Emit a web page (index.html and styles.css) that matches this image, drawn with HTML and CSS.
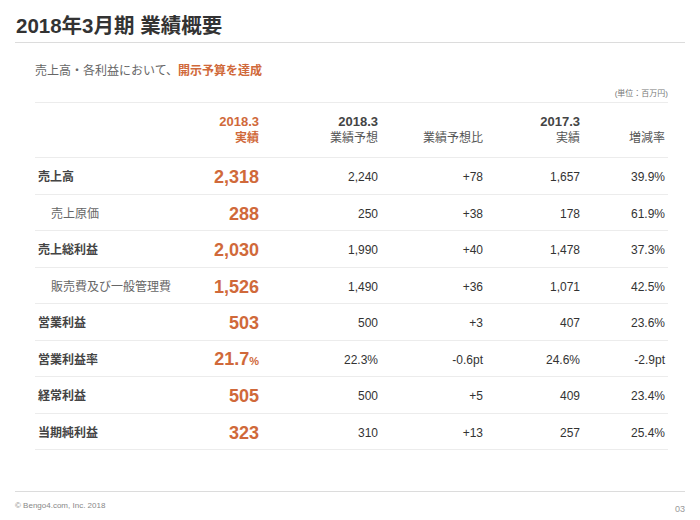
FILE: index.html
```html
<!DOCTYPE html>
<html lang="ja">
<head>
<meta charset="utf-8">
<title>2018年3月期 業績概要</title>
<link rel="stylesheet" href="styles.css">
</head>
<body>
<div class="slide">
  <header class="head">
    <h1 class="title">2018年3月期 業績概要</h1>
  </header>
  <main class="content">
    <p class="lead">売上高・各利益において、<strong class="accent">開示予算を達成</strong></p>
    <div class="unit">(単位：百万円)</div>
    <div class="table">
      <div class="row hdr">
        <div class="c lbl"></div>
        <div class="c num accent-h"><b>2018.3</b><span>実績</span></div>
        <div class="c num"><b>2018.3</b><span>業績予想</span></div>
        <div class="c num"><span>業績予想比</span></div>
        <div class="c num"><b>2017.3</b><span>実績</span></div>
        <div class="c num"><span>増減率</span></div>
      </div>
      <div class="row">
        <div class="c lbl strong">売上高</div>
        <div class="c num big">2,318</div>
        <div class="c num">2,240</div>
        <div class="c num">+78</div>
        <div class="c num">1,657</div>
        <div class="c num">39.9%</div>
      </div>
      <div class="row">
        <div class="c lbl sub">売上原価</div>
        <div class="c num big">288</div>
        <div class="c num">250</div>
        <div class="c num">+38</div>
        <div class="c num">178</div>
        <div class="c num">61.9%</div>
      </div>
      <div class="row">
        <div class="c lbl strong">売上総利益</div>
        <div class="c num big">2,030</div>
        <div class="c num">1,990</div>
        <div class="c num">+40</div>
        <div class="c num">1,478</div>
        <div class="c num">37.3%</div>
      </div>
      <div class="row">
        <div class="c lbl sub">販売費及び一般管理費</div>
        <div class="c num big">1,526</div>
        <div class="c num">1,490</div>
        <div class="c num">+36</div>
        <div class="c num">1,071</div>
        <div class="c num">42.5%</div>
      </div>
      <div class="row">
        <div class="c lbl strong">営業利益</div>
        <div class="c num big">503</div>
        <div class="c num">500</div>
        <div class="c num">+3</div>
        <div class="c num">407</div>
        <div class="c num">23.6%</div>
      </div>
      <div class="row">
        <div class="c lbl strong">営業利益率</div>
        <div class="c num big">21.7<small class="pct">%</small></div>
        <div class="c num">22.3%</div>
        <div class="c num">-0.6pt</div>
        <div class="c num">24.6%</div>
        <div class="c num">-2.9pt</div>
      </div>
      <div class="row">
        <div class="c lbl strong">経常利益</div>
        <div class="c num big">505</div>
        <div class="c num">500</div>
        <div class="c num">+5</div>
        <div class="c num">409</div>
        <div class="c num">23.4%</div>
      </div>
      <div class="row">
        <div class="c lbl strong">当期純利益</div>
        <div class="c num big">323</div>
        <div class="c num">310</div>
        <div class="c num">+13</div>
        <div class="c num">257</div>
        <div class="c num">25.4%</div>
      </div>
    </div>
  </main>
  <footer class="foot">
    <span class="copy">© Bengo4.com, Inc. 2018</span>
    <span class="page">03</span>
  </footer>
</div>
</body>
</html>
```

FILE: styles.css
```css
* { box-sizing: border-box; }
html, body { margin: 0; padding: 0; background: #fff; }
body {
  font-family: "Liberation Sans", "Noto Sans CJK JP", sans-serif;
  color: #333;
}
.slide {
  width: 700px;
  height: 520px;
  display: flex;
  flex-direction: column;
  background: #fff;
}
.head {
  margin: 0 15px;
  padding: 14px 0 5px 1px;
  border-bottom: 1px solid #dcdcdc;
}
.title {
  margin: 0;
  font-size: 20.5px;
  line-height: 23px;
  font-weight: bold;
  color: #333;
}
.content {
  margin: 0 32px 0 35px;
}
.lead {
  margin: 20px 0 0 0;
  font-size: 12px;
  line-height: 16px;
  color: #666;
}
.accent {
  color: #d0693a;
  font-weight: bold;
}
.unit {
  margin-top: 10px;
  padding-bottom: 3px;
  font-size: 8px;
  line-height: 10px;
  color: #777;
  text-align: right;
  border-bottom: 1px solid #ececec;
}
.table {
  display: flex;
  flex-direction: column;
}
.row {
  display: grid;
  grid-template-columns: 135px 92px 119px 105px 97px 85px;
  align-items: center;
  height: 36.5px;
  padding-top: 3px;
  border-bottom: 1px solid #ececec;
}
.row.hdr {
  height: 55px;
  padding-top: 0;
  align-items: end;
  padding-bottom: 11px;
}
.c {
  padding-right: 3px;
  font-size: 12px;
  line-height: 16px;
  color: #333;
  white-space: nowrap;
}
.num { text-align: right; }
.hdr .c {
  display: flex;
  flex-direction: column;
  align-items: flex-end;
  color: #555;
}
.hdr b {
  font-size: 13px;
  line-height: 17px;
  color: #444;
}
.hdr .accent-h, .hdr .accent-h b { color: #d0693a; font-weight: bold; }
.lbl {
  padding-left: 3px;
  text-align: left;
}
.lbl.strong {
  font-weight: bold;
  color: #444;
}
.lbl.sub {
  padding-left: 16px;
  color: #666;
}
.big {
  font-size: 18px;
  line-height: 20px;
  font-weight: bold;
  color: #d0693a;
}
.pct {
  font-size: 11px;
}
.foot {
  margin: auto 15px 0 15px;
  height: 29px;
  border-top: 1px solid #dcdcdc;
  display: flex;
  justify-content: space-between;
  align-items: flex-start;
  color: #888;
}
.copy {
  margin-top: 9px;
  font-size: 8px;
  line-height: 10px;
}
.page {
  margin-top: 12px;
  font-size: 9px;
  line-height: 11px;
  color: #999;
}
```
